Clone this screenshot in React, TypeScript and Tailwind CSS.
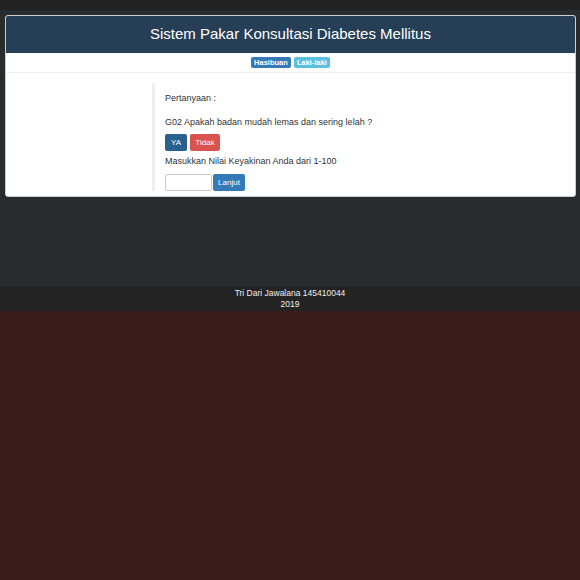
export default function App() {
  return (
    <div
      className="flex min-h-[580px] flex-col bg-[#391c1a] text-[#333]"
      style={{ fontFamily: '"Liberation Sans", Arial, sans-serif' }}
    >
      <div className="h-[10px] bg-[#222]" />
      <div className="flex h-[276px] flex-col bg-[#282c2f] pt-[5px] pr-[4px] pl-[5px]">
        <div className="overflow-hidden rounded-[3px] border border-[#ccc] bg-white">
          <div className="flex h-[37px] items-center justify-center bg-[#263f57] text-[15px] text-white">
            Sistem Pakar Konsultasi Diabetes Mellitus
          </div>
          <div className="flex justify-center gap-[3px] border-b border-[#eee] pt-[4px] pb-[4px] text-[7.5px] font-bold leading-[11px] text-white">
            <span className="rounded-[2px] bg-[#337ab7] px-[3px]">Hasibuan</span>
            <span className="rounded-[2px] bg-[#5bc0de] px-[3px]">Laki-laki</span>
          </div>
          <div className="flex pt-[10px] pb-[5px] pl-[146px]">
            <div className="flex flex-col border-l-[3px] border-[#eee] pl-[10px] text-[9px] leading-[14px]">
              <div className="mt-[8px]">Pertanyaan :</div>
              <div className="mt-[10px]">G02 Apakah badan mudah lemas dan sering lelah ?</div>
              <div className="mt-[5px] flex gap-[3px] text-[8px] text-white">
                <span className="flex h-[17px] w-[22px] items-center justify-center rounded-[2px] bg-[#286090]">YA</span>
                <span className="flex h-[17px] w-[30px] items-center justify-center rounded-[2px] bg-[#d9534f]">Tidak</span>
              </div>
              <div className="mt-[3px]">Masukkan Nilai Keyakinan Anda dari 1-100</div>
              <div className="mt-[6px] flex gap-[1px]">
                <div className="h-[17px] w-[47px] rounded-[2px] border border-[#ccc] bg-white" />
                <span className="flex h-[17px] w-[32px] items-center justify-center rounded-[2px] bg-[#337ab7] text-[8px] text-white">
                  Lanjut
                </span>
              </div>
            </div>
          </div>
        </div>
      </div>
      <div className="flex h-[25px] flex-col items-center justify-center bg-[#232323] text-[8.5px] leading-[11px] text-[#eee]">
        <div>Tri Dari Jawalana 145410044</div>
        <div>2019</div>
      </div>
    </div>
  );
}
